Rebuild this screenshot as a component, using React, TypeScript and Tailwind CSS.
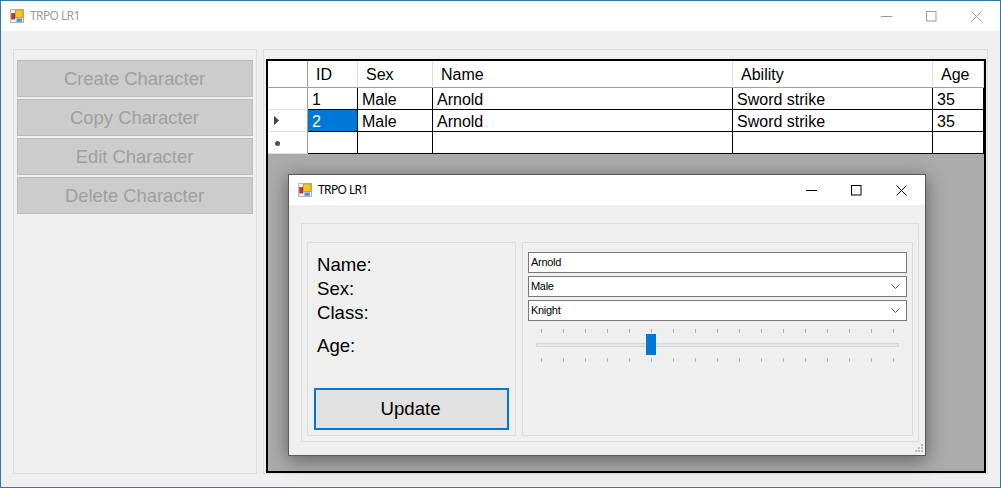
const headers = [
  { label: "ID", cls: "pl-[8px]" },
  { label: "Sex", cls: "pl-[8px]" },
  { label: "Name", cls: "pl-[8px]" },
  { label: "Ability", cls: "pl-[8px]" },
  { label: "Age", cls: "pl-[8px]" },
]

const rows = [
  { head: "", cells: ["1", "Male", "Arnold", "Sword strike", "35"] },
  { head: "arrow", cells: ["2", "Male", "Arnold", "Sword strike", "35"], selected: true },
  { head: "star", cells: ["", "", "", "", ""] },
]

const ticks = Array.from({ length: 17 }, (_, i) => i)

function AppIcon() {
  return (
    <svg width="14" height="14" viewBox="0 0 14 14" className="shrink-0">
      <rect x="0.5" y="0.5" width="13" height="13" fill="#f2f2f2" stroke="#b4b4b4" />
      <path d="M0 4.5H5M5 0V4M9 9V14M0 10.5H5" stroke="#c8c8c8" strokeWidth="1" />
      <rect x="1.5" y="4.5" width="3.5" height="5.5" fill="#c62a2a" stroke="#8f5050" strokeWidth="0.6" />
      <rect x="5.5" y="1" width="7.5" height="7.5" fill="#f5c518" stroke="#b89a30" strokeWidth="0.8" />
      <rect x="6.5" y="9.5" width="5.5" height="3.5" fill="#5b8fdc" stroke="#a8c0e6" strokeWidth="0.6" />
    </svg>
  )
}

function WindowButtons({ color, gap }: { color: string; gap: string }) {
  return (
    <div className={`flex items-center ${gap}`}>
      <svg width="11" height="11" viewBox="0 0 11 11">
        <path d="M0 5.5H11" stroke={color} strokeWidth="1" />
      </svg>
      <svg width="11" height="11" viewBox="0 0 11 11">
        <rect x="0.5" y="0.5" width="9.5" height="9.5" fill="none" stroke={color} />
      </svg>
      <svg width="11" height="11" viewBox="0 0 11 11">
        <path d="M0.5 0.5L10.5 10.5M10.5 0.5L0.5 10.5" stroke={color} strokeWidth="1" fill="none" />
      </svg>
    </div>
  )
}

function SideButton({ label }: { label: string }) {
  return (
    <button className="h-[37px] w-full bg-[#cccccc] border border-[#bcbcbc] pr-[1px] text-[18.4px] text-[#a0a0a0]">
      {label}
    </button>
  )
}

function TickRow() {
  return (
    <div className="flex justify-between pl-[13px] pr-[13px] h-[4px]">
      {ticks.map((t) => (
        <div key={t} className="w-px h-[4px] bg-[#b5b5b5]" />
      ))}
    </div>
  )
}

function Combo({ label }: { label: string }) {
  return (
    <div className="h-[21px] bg-white border border-[#7a7a7a] flex items-center justify-between pl-[2px] pr-[6px] text-[11px] tracking-[-0.3px] text-black">
      <span>{label}</span>
      <svg width="9" height="6" viewBox="0 0 9 6">
        <path d="M0.5 0.5L4.5 4.5L8.5 0.5" fill="none" stroke="#606060" />
      </svg>
    </div>
  )
}

export default function App() {
  return (
    <div className="relative w-[1001px] h-[488px] overflow-hidden flex flex-col bg-[#efefef] border border-[#2b7ba8] font-['Liberation_Sans',sans-serif]">
      {/* Title bar */}
      <div className="h-[30px] bg-white flex items-center justify-between pl-[9px] pr-[18px] shrink-0">
        <div className="flex items-center gap-[6px] font-['Noto_Sans',sans-serif] text-[12px] tracking-[-0.6px] text-[#9a9a9a]">
          <AppIcon />
          <span>TRPO LR1</span>
        </div>
        <WindowButtons color="#999999" gap="gap-[34px]" />
      </div>

      <div className="flex flex-1 gap-[6px] pt-[18px] pl-[12px] pr-[12px] pb-[13px]">
        {/* Left panel */}
        <div className="w-[244px] border border-[#dddddd] pt-[10px] px-[3px] flex flex-col gap-[2px]">
          <SideButton label="Create Character" />
          <SideButton label="Copy Character" />
          <SideButton label="Edit Character" />
          <SideButton label="Delete Character" />
        </div>

        {/* Right panel with grid */}
        <div className="w-[725px] border border-[#dddddd] pt-[9px] pl-[2px] flex">
          <div className="w-[720px] border-2 border-black bg-[#ababab]">
            <div className="grid grid-cols-[40px_50px_75px_300px_200px_51px] text-[16px] text-black">
              <div className="h-[27px] bg-white border-r border-b border-[#a0a0a0]" />
              {headers.map((h) => (
                <div
                  key={h.label}
                  className={`h-[27px] bg-white border-r border-b border-r-[#e0e0e0] border-b-[#a0a0a0] flex items-center pt-[2px] ${h.cls}`}
                >
                  {h.label}
                </div>
              ))}
              {rows.map((row, i) => (
                <RowCells key={i} row={row} />
              ))}
            </div>
          </div>
        </div>
      </div>

      {/* MDI child window */}
      <div className="absolute left-[287px] top-[173px] w-[638px] h-[282px] bg-[#efefef] border border-[#5a5a5a] shadow-[0_4px_18px_rgba(0,0,0,0.45)] flex flex-col">
        <div className="h-[30px] bg-white flex items-center justify-between pl-[9px] pr-[18px] shrink-0">
          <div className="flex items-center gap-[6px] font-['Noto_Sans',sans-serif] text-[12px] tracking-[-0.6px] text-black">
            <AppIcon />
            <span>TRPO LR1</span>
          </div>
          <WindowButtons color="#000000" gap="gap-[34px]" />
        </div>
        <div className="flex-1 pt-[18px] pl-[12px] pr-[6px] pb-[13px]">
          <div className="h-full border border-[#dddddd] pt-[18px] pl-[5px] pr-[5px] pb-[5px] flex gap-[6px]">
            <div className="w-[209px] border border-[#dddddd] pt-[10px] pl-[9px] flex flex-col text-[18.6px] text-black">
              <div className="h-[24px] leading-[24px]">Name:</div>
              <div className="h-[24px] leading-[24px]">Sex:</div>
              <div className="h-[24px] leading-[24px]">Class:</div>
              <div className="h-[24px] leading-[24px] mt-[9px]">Age:</div>
              <button className="mt-[30px] -ml-[3px] w-[195px] h-[42px] bg-[#e1e1e1] border-2 border-[#0078d7] pr-[2px] text-[18.6px] text-black">
                Update
              </button>
            </div>
            <div className="flex-1 border border-[#dddddd] pt-[9px] pl-[5px] pr-[5px] flex flex-col">
              <div className="h-[21px] bg-white border border-[#7a7a7a] flex items-center pl-[2px] text-[11px] tracking-[-0.3px] text-black">
                Arnold
              </div>
              <div className="mt-[3px] flex flex-col gap-[3px]">
                <Combo label="Male" />
                <Combo label="Knight" />
              </div>
              <div className="mt-[8px]">
                <TickRow />
                <div className="relative h-[25px]">
                  <div className="absolute left-[8px] right-[8px] top-[10px] h-[4px] bg-[#e5e7e5] border border-[#d6d8d6]" />
                  <div className="absolute left-[118px] top-[1px] w-[10px] h-[21px] bg-[#0078d7]" />
                </div>
                <TickRow />
              </div>
            </div>
          </div>
        </div>
        {/* Size grip */}
        <svg width="10" height="10" viewBox="0 0 10 10" className="absolute right-[1px] bottom-[1px]">
          <path d="M7 0h2v2H7zM4 3h2v2H4zM7 3h2v2H7zM1 6h2v2H1zM4 6h2v2H4zM7 6h2v2H7z" fill="#bdbdbd" />
        </svg>
      </div>
    </div>
  )
}

function RowCells({ row }: { row: { head: string; cells: string[]; selected?: boolean } }) {
  return (
    <>
      <div className="h-[22px] bg-white border-r border-b border-r-[#a0a0a0] border-b-[#e0e0e0] flex items-center pl-[6px]">
        {row.head === "arrow" && (
          <svg width="5" height="9" viewBox="0 0 5 9">
            <path d="M0 0L5 4.5L0 9Z" fill="#404040" />
          </svg>
        )}
        {row.head === "star" && <div className="ml-[1px] mt-[2px] w-[5px] h-[5px] rounded-full bg-[#505050]" />}
      </div>
      {row.cells.map((c, j) => (
        <div
          key={j}
          className={`h-[22px] border-r border-b border-black flex items-center pl-[4px] pt-[2px] ${
            row.selected && j === 0 ? "bg-[#0078d7] text-white" : "bg-white"
          }`}
        >
          {c}
        </div>
      ))}
    </>
  )
}
